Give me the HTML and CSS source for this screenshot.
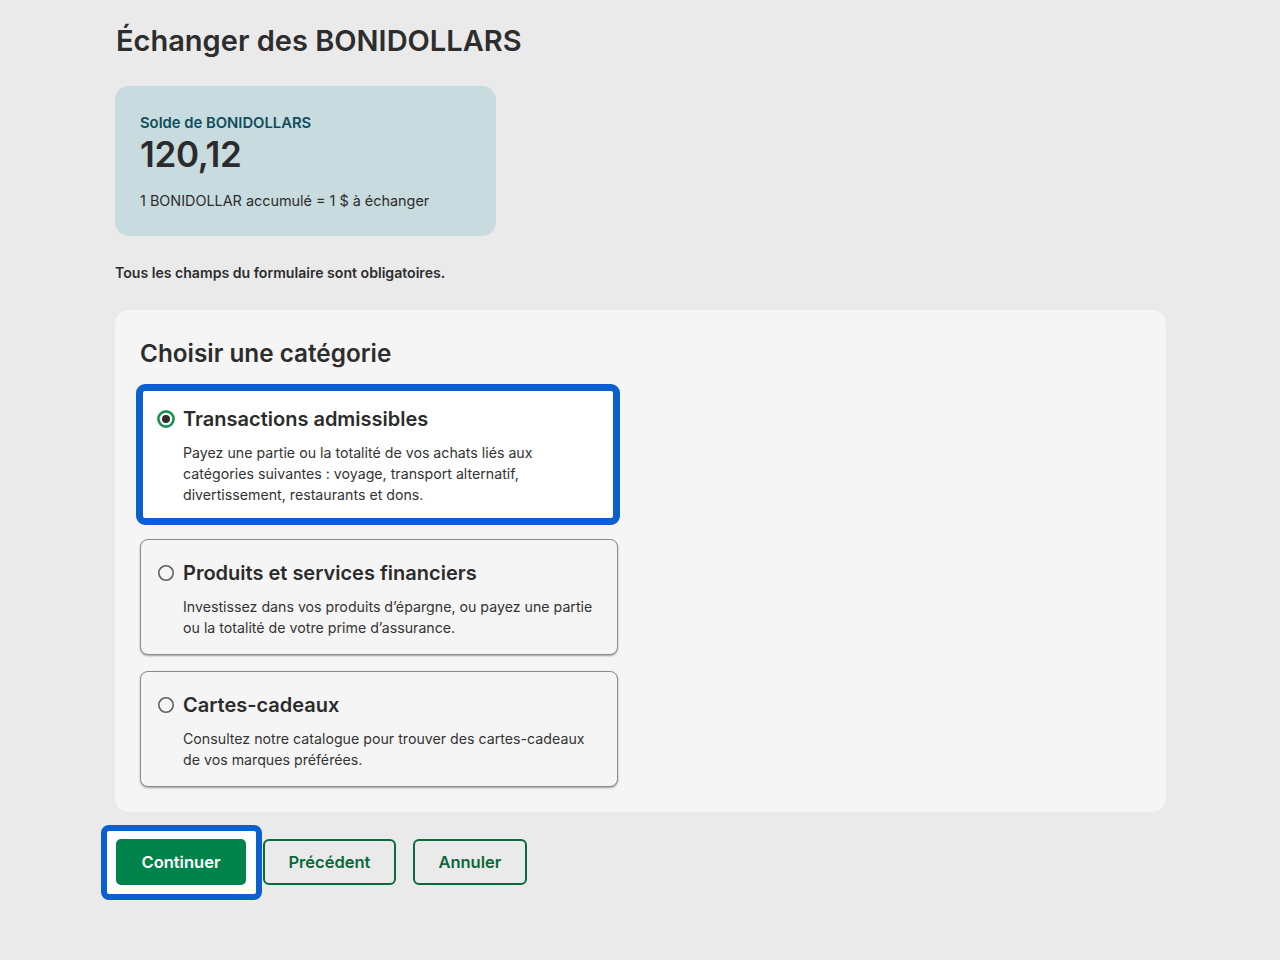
FILE: index.html
```html
<!DOCTYPE html>
<html lang="fr">
<head>
<meta charset="utf-8">
<title>Échanger des BONIDOLLARS</title>
<link rel="stylesheet" href="styles.css">
</head>
<body>
<main class="page">
  <h1 class="page-title">Échanger des BONIDOLLARS</h1>

  <section class="balance">
    <div class="balance-label">Solde de BONIDOLLARS</div>
    <div class="balance-value">120,12</div>
    <div class="balance-note">1 BONIDOLLAR accumulé = 1 $ à échanger</div>
  </section>

  <p class="required">Tous les champs du formulaire sont obligatoires.</p>

  <form class="panel">
    <h2 class="panel-title">Choisir une catégorie</h2>
    <div class="options">
      <label class="option option-selected">
        <span class="option-head">
          <svg class="radio" width="18" height="18" viewBox="0 0 18 18" aria-hidden="true">
            <circle cx="9" cy="9" r="7.6" fill="#fff" stroke="#16924f" stroke-width="2.6"/>
            <circle cx="9" cy="9" r="4" fill="#2e2e2e"/>
          </svg>
          <span class="option-title">Transactions admissibles</span>
        </span>
        <span class="option-desc">Payez une partie ou la totalité de vos achats liés aux catégories suivantes : voyage, transport alternatif, divertissement, restaurants et dons.</span>
      </label>

      <label class="option">
        <span class="option-head">
          <svg class="radio" width="18" height="18" viewBox="0 0 18 18" aria-hidden="true">
            <circle cx="9" cy="9" r="7.2" fill="none" stroke="#5f5f5f" stroke-width="1.6"/>
          </svg>
          <span class="option-title">Produits et services financiers</span>
        </span>
        <span class="option-desc">Investissez dans vos produits d’épargne, ou payez une partie ou la totalité de votre prime d’assurance.</span>
      </label>

      <label class="option">
        <span class="option-head">
          <svg class="radio" width="18" height="18" viewBox="0 0 18 18" aria-hidden="true">
            <circle cx="9" cy="9" r="7.2" fill="none" stroke="#5f5f5f" stroke-width="1.6"/>
          </svg>
          <span class="option-title">Cartes-cadeaux</span>
        </span>
        <span class="option-desc">Consultez notre catalogue pour trouver des cartes-cadeaux de vos marques préférées.</span>
      </label>
    </div>
  </form>

  <div class="actions">
    <span class="focus-ring"><button class="btn btn-primary" type="button">Continuer</button></span>
    <button class="btn btn-secondary" type="button">Précédent</button>
    <button class="btn btn-secondary" type="button">Annuler</button>
  </div>
</main>
</body>
</html>
```
FILE: styles.css
```css
* { box-sizing: border-box; }

html, body {
  margin: 0;
  padding: 0;
  background: #eaeaea;
}

body {
  font-family: Inter, "Noto Sans", "Liberation Sans", sans-serif;
  color: #2d2d2d;
}

.page {
  width: 1051px;
  margin-left: 115px;
  padding-top: 23px;
  padding-bottom: 40px;
}

.page-title {
  margin: 0;
  font-size: 29px;
  line-height: 36px;
  font-weight: 600;
  color: #2d2d2d;
  padding-left: 1px;
}

.balance {
  margin-top: 27px;
  width: 381px;
  height: 150px;
  background: #c8dcdf;
  border-radius: 14px;
  padding: 27px 25px 0;
}

.balance-label {
  font-size: 14.8px;
  line-height: 20px;
  font-weight: 600;
  color: #0f4e5e;
}

.balance-value {
  font-size: 35px;
  line-height: 42px;
  font-weight: 600;
  color: #2b2b2b;
  letter-spacing: -0.3px;
}

.balance-note {
  margin-top: 16px;
  font-size: 14.4px;
  line-height: 20px;
  color: #2d2d2d;
}

.required {
  margin: 27px 0 0;
  font-size: 14.1px;
  line-height: 20px;
  font-weight: 600;
  color: #2d2d2d;
}

.panel {
  margin-top: 27px;
  background: #f5f5f5;
  border-radius: 14px;
  padding: 27px 25px 24px;
  height: 502px;
}

.panel-title {
  margin: 0;
  font-size: 24.3px;
  line-height: 32px;
  font-weight: 600;
  color: #2d2d2d;
}

.options {
  margin-top: 15px;
  width: 478px;
  display: flex;
  flex-direction: column;
  gap: 16px;
}

.option {
  display: flex;
  flex-direction: column;
  gap: 9px;
  border: 1px solid #8c8c8c;
  border-radius: 8px;
  padding: 19px 21px 16px 16px;
  background: #f5f5f5;
  box-shadow: 0 1px 2px rgba(0, 0, 0, 0.35);
  cursor: pointer;
}

.option-selected {
  margin: 0 -2px -2px -4px;
  border: 7px solid #0a60cf;
  border-radius: 9px;
  background: #fff;
  padding: 14px 19px 13px 14px;
  box-shadow: none;
}

.option-head {
  display: flex;
  align-items: center;
  gap: 8px;
  height: 28px;
}

.radio {
  flex: none;
  display: block;
}

.option-title {
  font-size: 20px;
  line-height: 28px;
  font-weight: 600;
  color: #2b2b2b;
}

.option-desc {
  padding-left: 26px;
  font-size: 14.2px;
  line-height: 21px;
  color: #333;
}

.actions {
  margin-top: 27px;
  display: flex;
  gap: 17px;
  padding-left: 1px;
}

.focus-ring {
  display: flex;
  margin: -14px -16px -15px -15px;
  padding: 8px 10px 9px 9px;
  border: 6px solid #0a60cf;
  border-radius: 8px;
  background: #fff;
}

.btn {
  height: 46px;
  padding: 0 23.5px;
  border-radius: 6px;
  border: 2px solid #0b6a3b;
  font-family: inherit;
  font-size: 16.5px;
  font-weight: 600;
  cursor: pointer;
}

.btn-primary {
  background: #00834a;
  border-color: #00834a;
  color: #fff;
  border-radius: 5px;
}

.btn-secondary {
  background: transparent;
  color: #0b6a3b;
}
```
